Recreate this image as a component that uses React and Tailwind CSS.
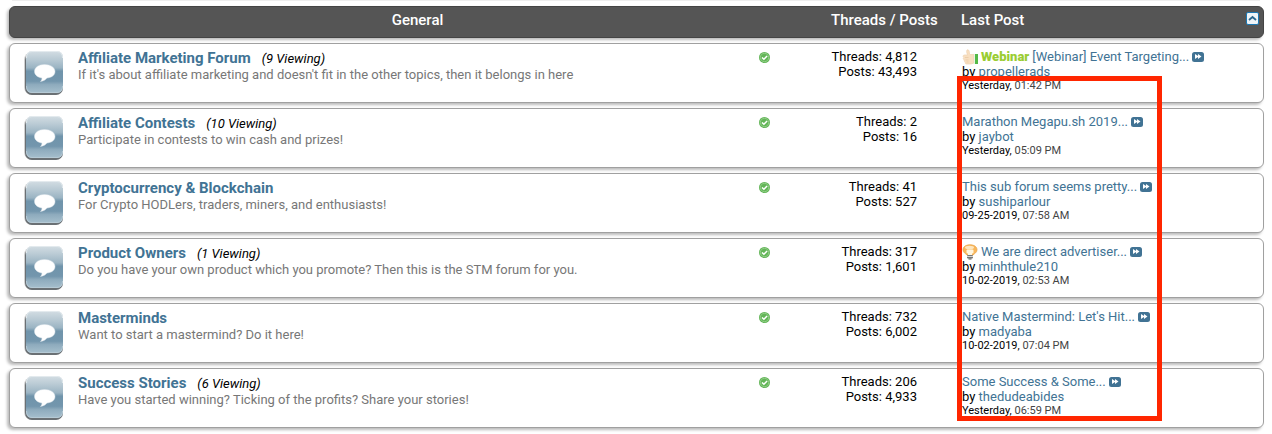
import React, { useState } from 'react'

const forums = [
  {
    title: 'Affiliate Marketing Forum',
    viewing: 9,
    description: "If it's about affiliate marketing and doesn't fit in the other topics, then it belongs in here",
    threads: '4,812',
    posts: '43,493',
    last: { icon: 'thumb', prefix: 'Webinar', title: '[Webinar] Event Targeting...', user: 'propellerads', date: 'Yesterday,', time: '01:42 PM' },
  },
  {
    title: 'Affiliate Contests',
    viewing: 10,
    description: 'Participate in contests to win cash and prizes!',
    threads: '2',
    posts: '16',
    last: { title: 'Marathon Megapu.sh 2019...', user: 'jaybot', date: 'Yesterday,', time: '05:09 PM' },
  },
  {
    title: 'Cryptocurrency & Blockchain',
    description: 'For Crypto HODLers, traders, miners, and enthusiasts!',
    threads: '41',
    posts: '527',
    last: { title: 'This sub forum seems pretty...', user: 'sushiparlour', date: '09-25-2019,', time: '07:58 AM' },
  },
  {
    title: 'Product Owners',
    viewing: 1,
    description: 'Do you have your own product which you promote? Then this is the STM forum for you.',
    threads: '317',
    posts: '1,601',
    last: { icon: 'bulb', title: 'We are direct advertiser...', user: 'minhthule210', date: '10-02-2019,', time: '02:53 AM' },
  },
  {
    title: 'Masterminds',
    description: 'Want to start a mastermind? Do it here!',
    threads: '732',
    posts: '6,002',
    last: { title: "Native Mastermind: Let's Hit...", user: 'madyaba', date: '10-02-2019,', time: '07:04 PM' },
  },
  {
    title: 'Success Stories',
    viewing: 6,
    description: 'Have you started winning? Ticking of the profits? Share your stories!',
    threads: '206',
    posts: '4,933',
    last: { title: 'Some Success & Some...', user: 'thedudeabides', date: 'Yesterday,', time: '06:59 PM' },
  },
]

const ForumIcon = () => (
  <svg width="40" height="46" viewBox="0 0 40 46" aria-hidden="true">
    <defs>
      <linearGradient id="tile" x1="0" y1="0" x2="0" y2="1">
        <stop offset="0" stopColor="#d3dde3" />
        <stop offset="0.2" stopColor="#b9cad4" />
        <stop offset="0.4" stopColor="#9bb4c3" />
        <stop offset="0.48" stopColor="#7094ab" />
        <stop offset="0.72" stopColor="#7396ad" />
        <stop offset="0.8" stopColor="#8eabbd" />
        <stop offset="1" stopColor="#a6bfcd" />
      </linearGradient>
    </defs>
    <rect x="0" y="2" width="38" height="43" rx="8" fill="#d0d0d0" />
    <rect x="1" y="3" width="38" height="42" rx="7" fill="#6a7074" />
    <rect x="2" y="1" width="37" height="42" rx="6" fill="url(#tile)" />
    <path d="M2.500 8 Q2.500 1.500 8 1.500 H33 Q38.500 1.500 38.500 8" fill="none" stroke="#e3eaee" />
    <path d="M2.500 36 Q2.500 42.500 8 42.500 H33 Q38.500 42.500 38.500 36" fill="none" stroke="#b6cad5" />
    <path
      d="M20.500 14.500 C14.500 14.500 10.500 17.500 10.500 21.500 C10.500 25 14 27.500 18 28 C18 30 17 31 16.500 31.500 C19.500 31 22 29.500 23 28 C28 27.500 31 25 31 21.500 C31 17.500 26.500 14.500 20.500 14.500 Z"
      fill="#fff"
      stroke="#dce5ea"
      strokeWidth="0.5"
    />
  </svg>
)

const CheckIcon = () => (
  <svg width="12" height="12" viewBox="0 0 12 12" aria-hidden="true">
    <circle cx="6.500" cy="6.500" r="5.500" fill="#63b558" />
    <circle cx="6.500" cy="6.500" r="4.200" fill="none" stroke="#9bd391" strokeWidth="0.8" />
    <path d="M4 6.500 L5.900 8.300 L9.100 4.900" fill="none" stroke="#fff" strokeWidth="1.500" />
  </svg>
)

const GoIcon = () => (
  <svg width="12" height="10" viewBox="0 0 12 10" aria-hidden="true">
    <rect width="12" height="10" rx="2.500" fill="#417394" />
    <path d="M3 2 L6 4 V2 L9.500 4.500 L6 7 V5 L3 7 Z" fill="#fff" />
  </svg>
)

const ThumbIcon = () => (
  <svg width="16" height="16" viewBox="0 0 16 16" aria-hidden="true">
    <path
      d="M5 1 C6.500 0 7.500 2 7.500 4.500 L8.500 5.500 H12 V14 L9 15 H4.500 C3 15 3 13.500 3.500 13 C2 12.700 2 11.500 2.500 11 C1 10.500 1 9 1.800 8.500 C0.500 7.500 1 6 2.500 6 H5.500 C5 4 4.200 3 5 1 Z"
      fill="#f8dfc0"
      stroke="#efd3b2"
      strokeWidth="0.7"
    />
    <path d="M3 8.500 H6.500 M3.500 11 H6.500 M4.500 13 H6.500" stroke="#e8c7a0" strokeWidth="0.7" />
    <rect x="12" y="5" width="1" height="10" fill="#e8f5e4" />
    <rect x="13" y="5" width="3" height="10" fill="#54b948" />
  </svg>
)

const BulbIcon = () => (
  <svg width="16" height="16" viewBox="0 0 16 16" aria-hidden="true">
    <path
      d="M8 0.800 C3.500 0.800 1 3 1 5.800 C1 8.500 3.500 9.500 5 11 H11 C12.500 9.500 15 8.500 15 5.800 C15 3 12.500 0.800 8 0.800 Z"
      fill="#f8b75c"
      stroke="#eba64c"
      strokeWidth="0.8"
    />
    <ellipse cx="7.500" cy="3.500" rx="4.500" ry="1.800" fill="#fde6bf" />
    <rect x="4.500" y="5.500" width="7" height="4" rx="1" fill="#fff6e0" />
    <rect x="6" y="9" width="4" height="2" fill="#fff6e0" />
    <rect x="5" y="11" width="6" height="3.500" rx="1" fill="#777777" />
    <path d="M5 12.500 H11" stroke="#d5d5d5" />
    <rect x="6.500" y="14.500" width="3" height="1" fill="#555" />
  </svg>
)

const ForumRow = ({ forum }) => {
  const { last } = forum
  return (
    <tr className="flex min-h-[60px] rounded-md border border-[#a0a0a0] bg-white pt-[5px] shadow-[-2px_2px_3px_#bbbbbb]">
      <td className="flex min-w-0 flex-1 pt-px">
        <span className="ml-3.5 w-[54px] shrink-0">
          <ForumIcon />
        </span>
        <div>
          <h2 className="text-[15px] leading-[17px] font-bold text-[#417394]">
            <a href="#forum">{forum.title}</a>
            {forum.viewing && (
              <span className="ml-[11px] text-[13px] font-normal text-black italic">({forum.viewing} Viewing)</span>
            )}
          </h2>
          <p className="text-[13px] leading-4 text-[#777777]">{forum.description}</p>
        </div>
      </td>
      <td className="w-[68px] shrink-0 pt-0.5">
        <CheckIcon />
      </td>
      <td className="w-[136px] shrink-0 pr-[45px] text-right text-[13px] leading-[15px]">
        <div>Threads: {forum.threads}</div>
        <div>Posts: {forum.posts}</div>
      </td>
      <td className="w-[301px] shrink-0 text-[13px] leading-[15px] whitespace-nowrap">
        <div className="flex h-[15px] items-center gap-[3px]">
          {last.icon === 'thumb' && <ThumbIcon />}
          {last.icon === 'bulb' && <BulbIcon />}
          {last.prefix && <b className="font-black text-[#9acd32]">{last.prefix}</b>}
          <a href="#thread" className="text-[#417394]">{last.title}</a>
          <a href="#last-post" aria-label="Go to last post">
            <GoIcon />
          </a>
        </div>
        <div>
          by <a href="#user" className="text-[#417394]">{last.user}</a>
        </div>
        <div className="text-[11px] leading-[14px]">
          {last.date} <span className="text-[#444444]">{last.time}</span>
        </div>
      </td>
    </tr>
  )
}

const App = () => {
  const [open, setOpen] = useState(true)

  return (
    <div className="bg-white px-2 pb-1.5 font-['Roboto',sans-serif] text-black">
      <div className="mx-1 h-px bg-[#eeeeee]"></div>
      <div className="relative mt-[5px] ml-px">
        <table className="block">
          <thead className="block">
            <tr className="flex h-8 rounded-md border border-[#444444] bg-[#555555] text-[15px] leading-[26px] text-white shadow-[-2px_2px_3px_#bbbbbb]">
              <th className="flex-1 pr-1.5 font-medium" scope="col">General</th>
              <th className="w-[130px] shrink-0 text-left font-medium" scope="col">Threads / Posts</th>
              <th className="flex w-[302px] shrink-0 justify-between pr-1 font-medium" scope="col">
                Last Post
                <button
                  type="button"
                  aria-label="Collapse category"
                  onClick={() => setOpen(!open)}
                  className="mt-[5px] flex h-[13px] w-[13px] items-center justify-center rounded-xs border border-[#1b78b4] bg-[#eef4f8]"
                >
                  <svg width="9" height="7" viewBox="0 0 9 7" aria-hidden="true">
                    <path d="M1 5 L4.500 2 L8 5" fill="none" stroke="#2a688f" strokeWidth="1.800" />
                  </svg>
                </button>
              </th>
            </tr>
          </thead>
          {open && (
            <tbody className="mt-[5px] flex flex-col gap-[5px]">
              {forums.map((forum) => (
                <ForumRow key={forum.title} forum={forum} />
              ))}
            </tbody>
          )}
        </table>

        {/* Highlight over the last post column */}
        <div className="pointer-events-none absolute top-[70px] right-[102px] bottom-[7px] w-[205px] border-5 border-[#ff2600]"></div>
      </div>
    </div>
  )
}

export default App
